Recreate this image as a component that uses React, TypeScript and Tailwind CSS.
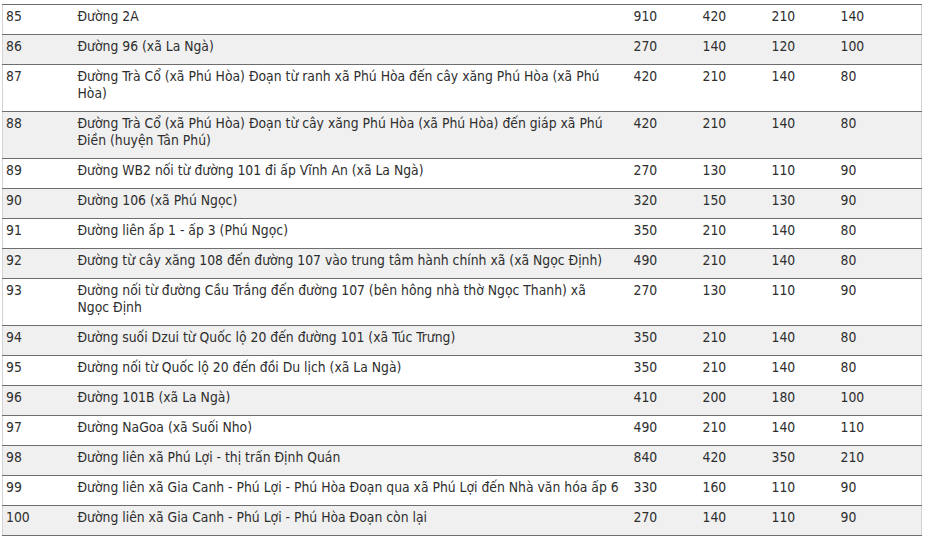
type Row = [string, string, string, string, string, string]

const rows: Row[] = [
  ['85', 'Đường 2A', '910', '420', '210', '140'],
  ['86', 'Đường 96 (xã La Ngà)', '270', '140', '120', '100'],
  ['87', 'Đường Trà Cổ (xã Phú Hòa) Đoạn từ ranh xã Phú Hòa đến cây xăng Phú Hòa (xã Phú Hòa)', '420', '210', '140', '80'],
  ['88', 'Đường Trà Cổ (xã Phú Hòa) Đoạn từ cây xăng Phú Hòa (xã Phú Hòa) đến giáp xã Phú Điền (huyện Tân Phú)', '420', '210', '140', '80'],
  ['89', 'Đường WB2 nối từ đường 101 đi ấp Vĩnh An (xã La Ngà)', '270', '130', '110', '90'],
  ['90', 'Đường 106 (xã Phú Ngọc)', '320', '150', '130', '90'],
  ['91', 'Đường liên ấp 1 - ấp 3 (Phú Ngọc)', '350', '210', '140', '80'],
  ['92', 'Đường từ cây xăng 108 đến đường 107 vào trung tâm hành chính xã (xã Ngọc Định)', '490', '210', '140', '80'],
  ['93', 'Đường nối từ đường Cầu Trắng đến đường 107 (bên hông nhà thờ Ngọc Thanh) xã\nNgọc Định', '270', '130', '110', '90'],
  ['94', 'Đường suối Dzui từ Quốc lộ 20 đến đường 101 (xã Túc Trưng)', '350', '210', '140', '80'],
  ['95', 'Đường nối từ Quốc lộ 20 đến đồi Du lịch (xã La Ngà)', '350', '210', '140', '80'],
  ['96', 'Đường 101B (xã La Ngà)', '410', '200', '180', '100'],
  ['97', 'Đường NaGoa (xã Suối Nho)', '490', '210', '140', '110'],
  ['98', 'Đường liên xã Phú Lợi - thị trấn Định Quán', '840', '420', '350', '210'],
  ['99', 'Đường liên xã Gia Canh - Phú Lợi - Phú Hòa Đoạn qua xã Phú Lợi đến Nhà văn hóa ấp 6', '330', '160', '110', '90'],
  ['100', 'Đường liên xã Gia Canh - Phú Lợi - Phú Hòa Đoạn còn lại', '270', '140', '110', '90'],
]

export default function App() {
  return (
    <div className="w-[925px] h-[538px] overflow-hidden bg-white pl-[2px] pt-[4px] font-['DejaVu_Sans_Condensed','DejaVu_Sans',sans-serif] text-[13.8px] leading-[17px] text-[#2e2e2e]">
      <table className="w-[920px] table-fixed border-collapse border-l border-r border-l-[#d4d4d4] border-r-[#d4d4d4]">
        <colgroup>
          <col className="w-[72px]" />
          <col className="w-[556px]" />
          <col className="w-[69px]" />
          <col className="w-[69px]" />
          <col className="w-[69px]" />
          <col />
        </colgroup>
        <tbody>
          {rows.map((r, i) => (
            <tr
              key={r[0]}
              className={`${i % 2 === 1 ? 'bg-[#f0f0f0]' : 'bg-white'} border-b border-[#6e6e6e] ${i === 0 ? 'border-t' : ''}`}
            >
              {r.map((c, j) => (
                <td key={j} className="align-top whitespace-pre-line pt-[3px] pb-[9px] pl-[3px] pr-0">
                  {c}
                </td>
              ))}
            </tr>
          ))}
        </tbody>
      </table>
    </div>
  )
}
